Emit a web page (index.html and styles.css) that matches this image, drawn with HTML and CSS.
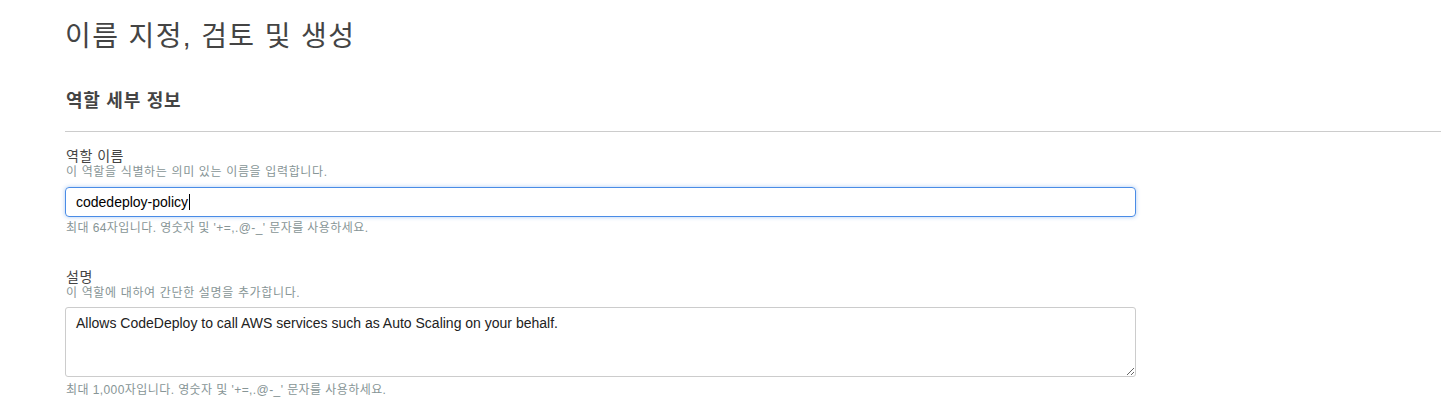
FILE: index.html
```html
<!DOCTYPE html>
<html lang="ko">
<head>
<meta charset="utf-8">
<title>이름 지정, 검토 및 생성</title>
<link rel="stylesheet" href="styles.css">
</head>
<body>
<main class="page">
  <h1 class="title">이름 지정, 검토 및 생성</h1>
  <h2 class="section-title">역할 세부 정보</h2>
  <hr class="divider">
  <div class="field">
    <div class="label">역할 이름</div>
    <div class="desc">이 역할을 식별하는 의미 있는 이름을 입력합니다.</div>
    <div class="input focused">codedeploy-policy<span class="caret"></span></div>
    <div class="hint">최대 64자입니다. 영숫자 및 '+=,.@-_' 문자를 사용하세요.</div>
  </div>
  <div class="field field-second">
    <div class="label">설명</div>
    <div class="desc">이 역할에 대하여 간단한 설명을 추가합니다.</div>
    <textarea class="textarea" readonly>Allows CodeDeploy to call AWS services such as Auto Scaling on your behalf.</textarea>
    <div class="hint hint-last">최대 1,000자입니다. 영숫자 및 '+=,.@-_' 문자를 사용하세요.</div>
  </div>
</main>
</body>
</html>
```

FILE: styles.css
```css
html, body {
  margin: 0;
  padding: 0;
  background: #fff;
}
body {
  font-family: "Liberation Sans", "Noto Sans CJK KR", sans-serif;
  color: #444;
}
.page {
  padding: 17px 0 0 65px;
}
.title {
  margin: 0;
  font-size: 28px;
  line-height: 40px;
  font-weight: 400;
  letter-spacing: 1.4px;
  color: #444;
}
.section-title {
  margin: 32px 0 0 1px;
  font-size: 18px;
  line-height: 24px;
  font-weight: 700;
  letter-spacing: 0.75px;
  color: #444;
}
.divider {
  margin: 18px 0 0 0;
  border: 0;
  border-top: 1px solid #ccc;
  height: 0;
}
.field {
  margin-top: 16px;
  width: 1071px;
}
.field-second {
  margin-top: 33px;
}
.label {
  font-size: 14px;
  line-height: 16px;
  letter-spacing: 0.5px;
  color: #444;
  padding-left: 1px;
}
.desc {
  font-size: 12px;
  line-height: 16px;
  letter-spacing: 0.65px;
  color: #879596;
  padding-left: 1px;
}
.input {
  margin-top: 7px;
  box-sizing: border-box;
  height: 30px;
  border: 1px solid #aab7b8;
  border-radius: 4px;
  padding: 0 10px;
  font-size: 14px;
  line-height: 28px;
  color: #000;
  display: flex;
  align-items: center;
}
.input.focused {
  border-color: #4a8ce6;
  box-shadow: 0 0 4px rgba(74, 140, 230, 0.45);
}
.caret {
  display: inline-block;
  width: 1px;
  height: 16px;
  background: #000;
  margin-left: 1px;
}
.hint {
  margin-top: 3px;
  font-size: 12px;
  line-height: 16px;
  letter-spacing: 0.42px;
  color: #879596;
  padding-left: 1px;
}
.hint-last {
  margin-top: 5px;
}
.textarea {
  display: block;
  margin-top: 6px;
  box-sizing: border-box;
  width: 1071px;
  height: 70px;
  border: 1px solid #ccc;
  border-radius: 3px;
  padding: 6px 10px;
  font-family: "Liberation Sans", "Noto Sans CJK KR", sans-serif;
  font-size: 14px;
  line-height: 18px;
  color: #222;
  outline: none;
  resize: vertical;
}
```
